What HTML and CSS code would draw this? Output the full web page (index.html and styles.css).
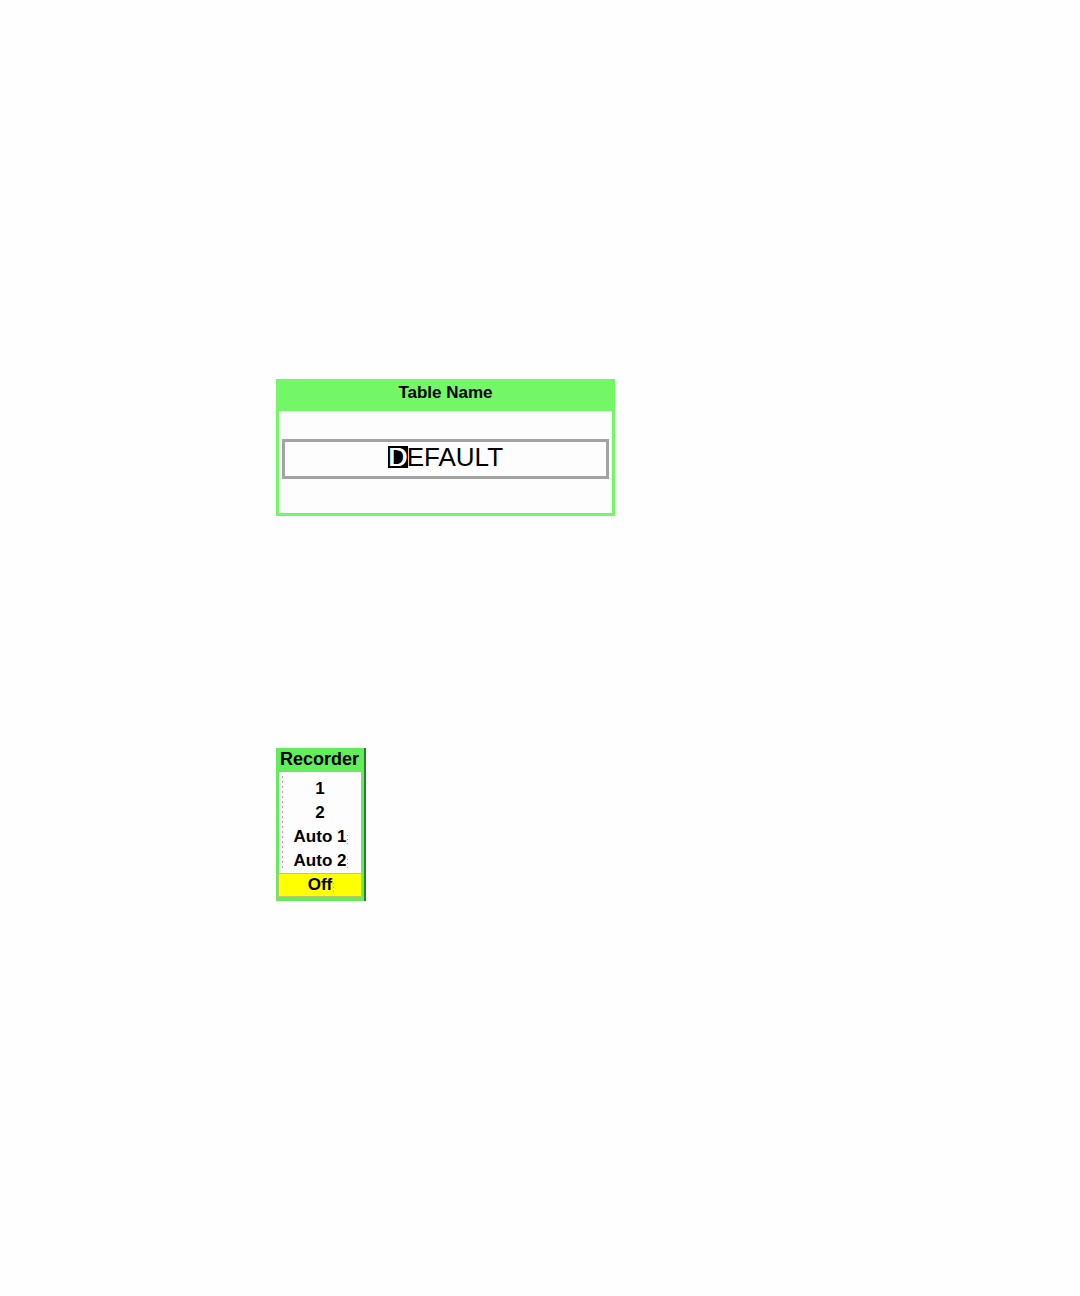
FILE: index.html
```html
<!DOCTYPE html>
<html lang="en">
	<head>
		<meta charset="UTF-8">
		<meta name="viewport" content="width=device-width, initial-scale=1.0" />
		<title>Table Name</title>
		<link rel="stylesheet" href="styles.css">
	</head>
	<body>
		<main class="screen">
			<form class="dialog">
				<label class="dialog-title" for="tableName">Table Name</label>
				<div class="dialog-body">
					<input class="name-field" id="tableName" type="text" value="DEFAULT" spellcheck="false" autocomplete="off" />
				</div>
			</form>
			<section class="menu">
				<h2 class="menu-title">Recorder</h2>
				<div class="menu-body">
					<div class="menu-list">
						<button class="item" type="button">1</button>
						<button class="item" type="button">2</button>
						<button class="item" type="button"><span class="mark">Auto 1</span></button>
						<button class="item" type="button"><span class="mark">Auto 2</span></button>
					</div>
					<button class="item active" type="button"><span class="mark">Off</span></button>
				</div>
			</section>
		</main>
		<script src="script.js"></script>
	</body>
</html>
```
FILE: styles.css
```css
*{
	margin:0;padding:0;
	box-sizing: border-box;
}
body{
	background: #fefefe;
	color: #000;
	font-family: "Liberation Sans", Arial, sans-serif;
}
.screen{
	display: flex;
	flex-direction: column;
	align-items: flex-start;
	gap: 232px;
	padding: 379px 20px 40px 276px;
}
/* name dialog */
.dialog{
	width: 100%;
	max-width: 339px;
	border: 3px solid #74f767;
	border-top: 0;
}
.dialog-title{
	display: block;
	padding-bottom: 4px;
	background: #74f767;
	font-size: 17px;
	font-weight: bold;
	line-height: 28px;
	text-align: center;
}
.dialog-body{
	padding: 28px 3px 34px;
	background: #fdfdfd;
}
/* the black cell behind the first letter is the cursor */
.name-field{
	display: block;
	width: 100%;
	height: 40px;
	padding-bottom: 4px;
	border: 3px solid #a3a3a3;
	border-radius: 0;
	outline: 0;
	background: #fdfdfd linear-gradient(#000, #000) calc(50% - 48px) 4px / 20px 22px no-repeat;
	color: #000;
	caret-color: transparent;
	font-family: inherit;
	font-size: 26px;
	line-height: 22px;
	text-align: center;
}
.name-field::selection{
	background: transparent;
	color: #fff;
	text-shadow: 1px 0 #fff;
}
/* recorder menu */
.menu{
	padding: 0 2px 4px;
	border-right: 2px solid #2f7a35;
	background: #62ee5b;
}
.menu-title{
	padding: 0 3px 2px 2px;
	font-size: 18px;
	line-height: 22px;
}
.menu-list{
	display: flex;
	flex-direction: column;
	margin: 0 1px;
	padding: 5px 0 0;
	background: #fdfdfd;
	background-image: repeating-linear-gradient(#c98fcf 0 2px, transparent 2px 5px);
	background-size: 1px 94px;
	background-position: 3px 4px;
	background-repeat: no-repeat;
}
.item{
	width: 100%;
	border: 0;
	background: none;
	color: #000;
	font-family: inherit;
	font-size: 17px;
	font-weight: bold;
	line-height: 24px;
	text-align: center;
}
.active{
	display: block;
	border: 1px solid #c5c56a;
	background: #ffff00;
	line-height: 22px;
}
.mark{
	padding: 0 2px;
	background: repeating-linear-gradient(transparent 0 3px, #9a9a9a 3px 4px) right 5px / 1px 12px no-repeat;
}
```
FILE: script.js
```js
// the cursor covers the first letter
var oName = document.getElementById('tableName');
oName.focus();
oName.setSelectionRange(0, 1);
```
